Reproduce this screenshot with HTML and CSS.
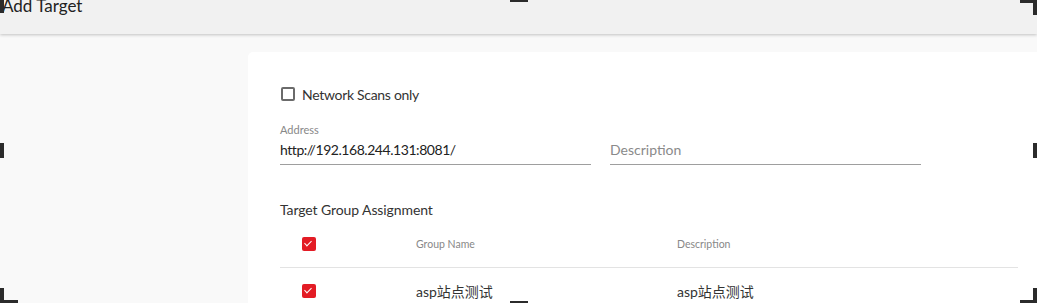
FILE: index.html
```html
<!DOCTYPE html>
<html lang="en">
<head>
    <meta charset="UTF-8">
    <meta name="viewport" content="width=device-width, initial-scale=1.0">
    <title>Add Target</title>
    <link rel="stylesheet" href="styles.css">
</head>
<body>
    <header class="page-header">
        <h1>Add Target</h1>
    </header>

    <main class="page-body">
        <div class="side"></div>
        <section class="card">
            <label class="check-line">
                <span class="box"></span>
                <span>Network Scans only</span>
            </label>

            <div class="fields">
                <div class="field">
                    <span class="field-label">Address</span>
                    <div class="field-input">http://192.168.244.131:8081/</div>
                </div>
                <div class="field">
                    <span class="field-label">&nbsp;</span>
                    <div class="field-input placeholder">Description</div>
                </div>
            </div>

            <h3 class="section-title">Target Group Assignment</h3>

            <div class="group-table">
                <div class="row head">
                    <div class="cell"><span class="box checked"></span></div>
                    <div class="cell">Group Name</div>
                    <div class="cell">Description</div>
                </div>
                <div class="row">
                    <div class="cell"><span class="box checked"></span></div>
                    <div class="cell">asp站点测试</div>
                    <div class="cell">asp站点测试</div>
                </div>
            </div>
        </section>
    </main>

    <!-- selection handles of the capture -->
    <div class="handle h-tl"></div>
    <div class="handle h-tm"></div>
    <div class="handle h-tr1"></div>
    <div class="handle h-tr2"></div>
    <div class="handle h-ml"></div>
    <div class="handle h-mr"></div>
    <div class="handle h-bl1"></div>
    <div class="handle h-bl2"></div>
    <div class="handle h-bm"></div>
    <div class="handle h-br1"></div>
    <div class="handle h-br2"></div>
</body>
</html>
```

FILE: styles.css
```css
body {
    margin: 0;
    font-family: Lato, "Noto Sans CJK SC", sans-serif;
    background: #f9f9f9;
    color: #333;
    height: 303px;
    overflow: hidden;
}
.page-header {
    height: 34px;
    background: #f1f1f1;
    box-shadow: 0 1px 3px rgba(0, 0, 0, 0.22);
    position: relative;
    z-index: 1;
    display: flow-root;
}
.page-header h1 {
    margin: -4px 0 0;
    padding-left: 2px;
    font-size: 17px;
    font-weight: normal;
    line-height: 20px;
    color: #222;
}
.page-body {
    display: flex;
    padding-top: 18px;
}
.side {
    width: 248px;
    flex: none;
}
.card {
    flex: 1;
    background: #fff;
    border-top-left-radius: 5px;
    padding: 34px 19px 20px 32px;
    min-height: 300px;
}
.check-line {
    display: flex;
    align-items: center;
    gap: 7px;
    font-size: 14px;
    letter-spacing: -0.3px;
    height: 16px;
}
.box {
    display: inline-block;
    width: 14px;
    height: 14px;
    box-sizing: border-box;
    border: 2px solid #6b6b6b;
    border-radius: 2px;
    margin-left: 1px;
}
.box.checked {
    background: #e31c25;
    border: none;
    position: relative;
}
.box.checked::after {
    content: "";
    position: absolute;
    left: 4px;
    top: 2px;
    width: 3px;
    height: 6px;
    border: solid #fff;
    border-width: 0 1.5px 1.5px 0;
    transform: rotate(45deg);
}
.fields {
    display: flex;
    gap: 19px;
    margin-top: 21px;
}
.field {
    width: 311px;
}
.field-label {
    display: block;
    font-size: 11px;
    color: #888;
    line-height: 14px;
}
.field-input {
    font-size: 14px;
    letter-spacing: -0.45px;
    color: #222;
    line-height: 20px;
    padding: 3px 0 4px;
    border-bottom: 1px solid #9e9e9e;
}
.field-input.placeholder {
    color: #8a8a8a;
    letter-spacing: 0;
}
.section-title {
    margin: 36px 0 0;
    font-size: 14px;
    font-weight: normal;
    line-height: 18px;
    letter-spacing: -0.1px;
    color: #333;
}
.group-table {
    margin-top: 13px;
}
.row {
    display: grid;
    grid-template-columns: 136px 261px 1fr;
    align-items: center;
    height: 24px;
    font-size: 14px;
    color: #333;
}
.row.head {
    font-size: 10.5px;
    color: #888;
    height: 24px;
    padding-bottom: 11px;
    border-bottom: 1px solid #e3e3e3;
    margin-bottom: 11px;
}
.row .cell:first-child {
    padding-left: 21px;
    display: flex;
}
.handle {
    position: absolute;
    background: #2b2b2b;
    z-index: 5;
}
.h-tl { left: 0; top: 0; width: 4px; height: 13px; }
.h-tm { left: 510px; top: 0; width: 18px; height: 2px; }
.h-tr1 { left: 1020px; top: 0; width: 17px; height: 3px; }
.h-tr2 { left: 1033px; top: 0; width: 4px; height: 15px; }
.h-ml { left: 0; top: 143px; width: 4px; height: 15px; }
.h-mr { left: 1033px; top: 143px; width: 4px; height: 15px; }
.h-bl1 { left: 0; top: 288px; width: 4px; height: 15px; }
.h-bl2 { left: 0; top: 300px; width: 18px; height: 3px; }
.h-bm { left: 510px; top: 301px; width: 18px; height: 2px; }
.h-br1 { left: 1020px; top: 300px; width: 17px; height: 3px; }
.h-br2 { left: 1033px; top: 288px; width: 4px; height: 15px; }
```
